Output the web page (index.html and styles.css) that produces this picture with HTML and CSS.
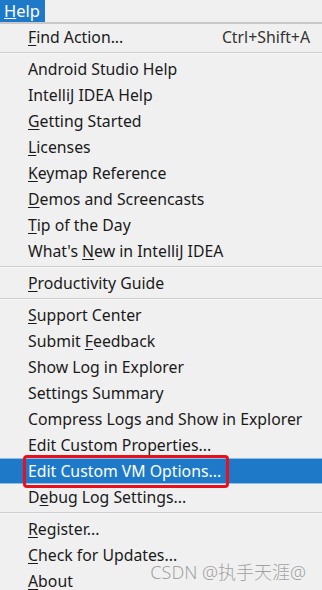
FILE: index.html
```html
<!DOCTYPE html>
<html lang="en">

<head>
    <meta charset="UTF-8">
    <meta name="viewport" content="width=device-width, initial-scale=1.0">
    <title>Help Menu</title>
    <link rel="stylesheet" href="styles.css">
</head>

<body>
    <div class="menubar">
        <span class="menu-title"><u>H</u>elp</span>
    </div>

    <div class="menu">
        <div class="item"><span><u>F</u>ind Action...</span><span class="shortcut">Ctrl+Shift+A</span></div>
        <div class="sep"></div>
        <div class="item"><span>Android Studio Help</span></div>
        <div class="item"><span>IntelliJ IDEA Help</span></div>
        <div class="item"><span><u>G</u>etting Started</span></div>
        <div class="item"><span><u>L</u>icenses</span></div>
        <div class="item"><span><u>K</u>eymap Reference</span></div>
        <div class="item"><span><u>D</u>emos and Screencasts</span></div>
        <div class="item"><span><u>T</u>ip of the Day</span></div>
        <div class="item"><span>What's <u>N</u>ew in IntelliJ IDEA</span></div>
        <div class="sep"></div>
        <div class="item"><span><u>P</u>roductivity Guide</span></div>
        <div class="sep"></div>
        <div class="item"><span><u>S</u>upport Center</span></div>
        <div class="item"><span>Submit <u>F</u>eedback</span></div>
        <div class="item"><span>Show Log in Explorer</span></div>
        <div class="item"><span>Settings Summary</span></div>
        <div class="item"><span>Compress Logs and Show in Explorer</span></div>
        <div class="item"><span>Edit Custom Properties...</span></div>
        <div class="item selected"><span>Edit Custom VM Options...</span><span class="mark"></span></div>
        <div class="item"><span>D<u>e</u>bug Log Settings...</span></div>
        <div class="sep"></div>
        <div class="item"><span><u>R</u>egister...</span></div>
        <div class="item"><span><u>C</u>heck for Updates...</span></div>
        <div class="item"><span><u>A</u>bout</span></div>
    </div>

    <!-- watermark -->
    <div class="watermark">CSDN @执手天涯@</div>
</body>

</html>
```

FILE: styles.css
```css
body {
    margin: 0;
    width: 322px;
    height: 590px;
    overflow: hidden;
    background-color: #f0f0f0;
    font-family: "Noto Sans", "Noto Sans CJK SC", sans-serif;
    font-size: 15.8px;
    color: #1a1a1a;
    position: relative;
}

.menubar {
    height: 22px;
    display: flex;
}

.menu-title {
    background-color: #1e7ac8;
    color: #ffffff;
    width: 45px;
    padding-left: 4px;
    box-sizing: border-box;
    line-height: 22px;
    font-size: 16.5px;
}

.menu {
    border-top: 2px solid #c8c8c8;
    background-color: #f0f0f0;
}

.item {
    height: 26px;
    line-height: 26px;
    padding-left: 28px;
    padding-right: 12px;
    display: flex;
    justify-content: space-between;
    position: relative;
    white-space: nowrap;
}

.item u {
    text-underline-offset: 2px;
}

.shortcut {
    color: #333333;
}

.sep {
    height: 6px;
    display: flex;
    align-items: center;
}

.sep::before {
    content: "";
    flex: 1;
    border-top: 1px solid #cfcfcf;
    border-bottom: 1px solid #f8f8f8;
}

.selected {
    background-color: #1e7ac8;
    color: #ffffff;
    box-shadow: inset 0 1px 0 #8cbde6, inset 0 -1px 0 #8cbde6;
}

/* red highlight box */
.mark {
    position: absolute;
    left: 23px;
    top: -3px;
    width: 206px;
    height: 33px;
    box-sizing: border-box;
    border: 3px solid #e8101a;
    border-radius: 4px;
}

.watermark {
    position: absolute;
    right: 16px;
    bottom: 6px;
    color: rgba(140, 140, 140, 0.8);
    font-size: 18px;
    font-weight: 300;
}
```
